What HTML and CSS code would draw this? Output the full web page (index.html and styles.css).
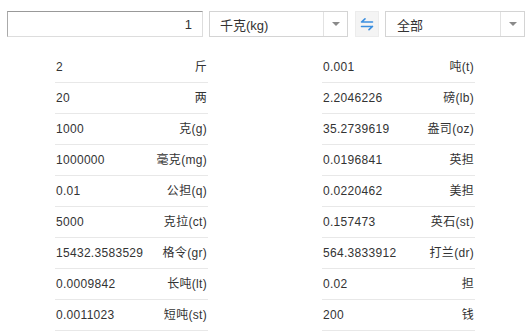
FILE: index.html
```html
<!DOCTYPE html>
<html lang="zh">
<head>
<meta charset="utf-8">
<link rel="stylesheet" href="styles.css">
</head>
<body>
<div class="bar">
  <input class="num" type="text" value="1">
  <div class="select w1"><span class="label">千克(kg)</span><span class="arrow"><i></i></span></div>
  <button class="swap"><svg width="14" height="14" viewBox="0 0 14 14"><path d="M1.5 5 H12.5 M1.5 5 L5 1.8 M12.5 9.5 H1.5 M12.5 9.5 L9 12.7" stroke="#3b8fe0" stroke-width="1.6" fill="none" stroke-linecap="round"/></svg></button>
  <div class="select w2"><span class="label">全部</span><span class="arrow"><i></i></span></div>
</div>
<div class="list">
  <div class="row"><span>2</span><span>斤</span></div>
  <div class="row"><span>0.001</span><span>吨(t)</span></div>
  <div class="row"><span>20</span><span>两</span></div>
  <div class="row"><span>2.2046226</span><span>磅(lb)</span></div>
  <div class="row"><span>1000</span><span>克(g)</span></div>
  <div class="row"><span>35.2739619</span><span>盎司(oz)</span></div>
  <div class="row"><span>1000000</span><span>毫克(mg)</span></div>
  <div class="row"><span>0.0196841</span><span>英担</span></div>
  <div class="row"><span>0.01</span><span>公担(q)</span></div>
  <div class="row"><span>0.0220462</span><span>美担</span></div>
  <div class="row"><span>5000</span><span>克拉(ct)</span></div>
  <div class="row"><span>0.157473</span><span>英石(st)</span></div>
  <div class="row"><span>15432.3583529</span><span>格令(gr)</span></div>
  <div class="row"><span>564.3833912</span><span>打兰(dr)</span></div>
  <div class="row"><span>0.0009842</span><span>长吨(lt)</span></div>
  <div class="row"><span>0.02</span><span>担</span></div>
  <div class="row"><span>0.0011023</span><span>短吨(st)</span></div>
  <div class="row"><span>200</span><span>钱</span></div>
</div>
</body>
</html>
```
FILE: styles.css
```css
html, body {
  margin: 0;
  padding: 0;
  background: #fff;
}
body {
  font-family: "Liberation Sans", "Noto Sans CJK SC", sans-serif;
  color: #333;
  font-size: 13px;
}
.bar {
  display: flex;
  align-items: stretch;
  padding: 11px 0 0 7px;
  height: 26px;
}
.num {
  box-sizing: border-box;
  width: 196px;
  height: 26px;
  margin: 0 6px 0 0;
  padding: 0 10px 0 4px;
  border: 1px solid #ddd;
  border-top-color: #999;
  border-left-color: #aaa;
  text-align: right;
  font: 13px "Liberation Sans", sans-serif;
  color: #333;
  outline: none;
}
.select {
  box-sizing: border-box;
  height: 26px;
  border: 1px solid #d4d4d4;
  display: flex;
  align-items: center;
}
.w1 { width: 139px; margin-right: 7px; }
.w2 { width: 140px; }
.label {
  flex: 1;
  padding-left: 10px;
  color: #333;
}
.w2 .label { padding-left: 11px; }
.arrow {
  width: 23px;
  height: 100%;
  border-left: 1px solid #e2e2e2;
  display: flex;
  align-items: center;
  justify-content: center;
}
.arrow i {
  width: 0;
  height: 0;
  border-left: 4px solid transparent;
  border-right: 4px solid transparent;
  border-top: 4px solid #8a8a8a;
}
.swap {
  box-sizing: border-box;
  width: 24px;
  height: 26px;
  margin-right: 6px;
  padding: 0;
  border: 1px solid #ececec;
  background: #f4f4f4;
  display: flex;
  align-items: center;
  justify-content: center;
}
.list {
  display: grid;
  grid-template-columns: 153px 153px;
  column-gap: 114px;
  padding: 15px 0 0 55px;
  font-size: 12px;
  letter-spacing: 0.3px;
}
.row {
  height: 30px;
  border-bottom: 1px solid #e8e8e8;
  display: flex;
  justify-content: space-between;
  align-items: center;
  padding: 0 1px;
  line-height: 16px;
}
```
